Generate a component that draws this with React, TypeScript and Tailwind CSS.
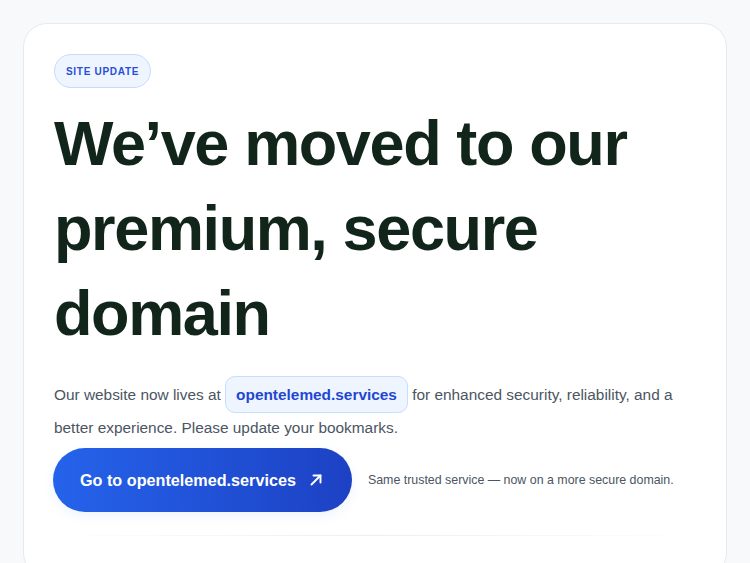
export default function App() {
  return (
    <div className="min-h-screen bg-[#f8f9fa] px-[23px] pt-[23px] font-['Liberation_Sans',Arial,sans-serif]">
      <div className="rounded-[24px] border border-[#e6eaf0] bg-white px-[30px] pt-[30px] pb-10">
        {/* Badge */}
        <span className="inline-flex h-[34px] items-center rounded-full border border-[#c7dbfd] bg-[#eef5ff] px-[11px] text-[10px] font-bold tracking-[0.07em] text-[#2a4fd6]">
          SITE UPDATE
        </span>

        {/* Headline */}
        <h1 className="mt-[13px] text-[63px] leading-[85px] font-bold tracking-[-0.022em] text-[#11251b]">
          We’ve moved to our premium, secure domain
        </h1>

        {/* Body */}
        <p className="mt-[22px] text-[15.4px] leading-[33px] text-[#4b5563]">
          Our website now lives at{' '}
          <span className="rounded-[10px] border border-[#c9ddfc] bg-[#eef5ff] px-[10px] py-[9px] font-bold text-[#1f47d1]">
            opentelemed.services
          </span>{' '}
          for enhanced security, reliability, and a better experience. Please update your bookmarks.
        </p>

        {/* CTA */}
        <div className="mt-[4px] flex items-center gap-4">
          <a
            href="#"
            className="-ml-px inline-flex h-[64px] items-center gap-[14px] rounded-full bg-gradient-to-r from-[#2563eb] to-[#1d41c4] pr-[30px] pl-[27px] text-[16.2px] font-bold text-white shadow-[0_4px_12px_rgba(37,99,235,0.08)]"
          >
            Go to opentelemed.services
            <svg width="12" height="12" viewBox="0 0 12 12" fill="none" stroke="currentColor" strokeWidth="1.9" strokeLinecap="round" strokeLinejoin="round">
              <path d="M1.5 10.5L10.5 1.5" />
              <path d="M3.5 1.5H10.5V8.5" />
            </svg>
          </a>
          <p className="text-[12.4px] text-[#4b5563]">Same trusted service — now on a more secure domain.</p>
        </div>

        {/* Divider */}
        <div className="mt-[23px] h-px bg-gradient-to-r from-transparent via-[#eceef2] to-transparent" />
      </div>
    </div>
  );
}
